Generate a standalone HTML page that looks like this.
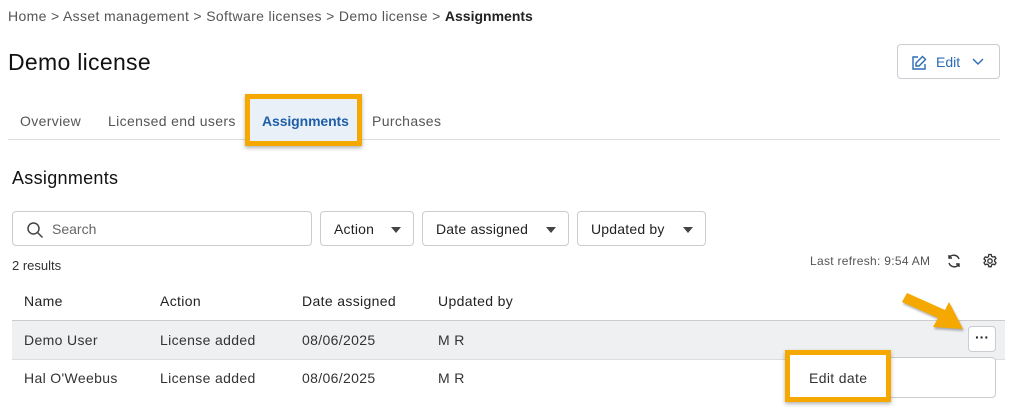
<!DOCTYPE html>
<html><head><style>
body{margin:0;width:1009px;height:409px;background:#fff;font-family:"Liberation Sans",sans-serif;color:#222;position:relative;overflow:hidden}
.a{position:absolute;white-space:nowrap}
.s{letter-spacing:0.35px}
.box{position:absolute;border:1px solid #c9ccd1;border-radius:4px;background:#fff;box-sizing:border-box}
.dd{font-size:14px;color:#222;display:flex;align-items:center;padding-left:13px;letter-spacing:0.2px}
.tri{position:absolute;right:12px;top:15px;width:0;height:0;border-left:5px solid transparent;border-right:5px solid transparent;border-top:6px solid #444}
</style></head><body>
<div class="a s" style="left:8px;top:8px;font-size:14px;color:#555">Home &gt; Asset management &gt; Software licenses &gt; Demo license &gt; <b style="color:#222;letter-spacing:0">Assignments</b></div>
<div class="a" style="left:8px;top:49px;font-size:23px;color:#111;letter-spacing:0.3px">Demo license</div>
<div class="box" style="left:897px;top:44px;width:103px;height:35px;color:#2a6cb5;font-size:14px">
<svg class="a" style="left:13px;top:10px" width="16" height="16" viewBox="0 0 16 16" fill="none" stroke="#2a6cb5" stroke-width="1.4"><path d="M7 2H2v12h12V9"/><path d="M11.5 1.5l3 3L8 11H5V8z"/></svg>
<span class="a" style="left:38px;top:9px">Edit</span>
<svg class="a" style="left:74px;top:13px" width="12" height="8" viewBox="0 0 12 8" fill="none" stroke="#2a6cb5" stroke-width="1.4"><path d="M1 1l5 5 5-5"/></svg>
</div>
<div class="a" style="left:8px;top:139px;width:992px;height:1px;background:#ddd"></div>
<div class="a" style="left:245px;top:94px;width:107px;height:42px;border:5px solid #f5a800;background:#e9f0f8;box-shadow:0 2px 4px rgba(0,0,0,.3)"></div>
<div class="a s" style="left:20px;top:113px;font-size:14px;color:#555">Overview</div>
<div class="a s" style="left:108px;top:113px;font-size:14px;color:#555">Licensed end users</div>
<div class="a" style="left:262px;top:113px;font-size:14px;color:#1f5fa8;font-weight:bold;letter-spacing:-0.1px">Assignments</div>
<div class="a s" style="left:372px;top:113px;font-size:14px;color:#555">Purchases</div>
<div class="a" style="left:12px;top:168px;font-size:18px;color:#111;letter-spacing:0.3px">Assignments</div>
<div class="box" style="left:12px;top:211px;width:300px;height:35px">
<svg class="a" style="left:13px;top:9px" width="18" height="18" viewBox="0 0 18 18" fill="none" stroke="#444" stroke-width="1.5"><circle cx="7.5" cy="7.5" r="5.5"/><path d="M11.5 11.5l5 5"/></svg>
<span class="a" style="left:39px;top:9px;font-size:14px;color:#666">Search</span></div>
<div class="box dd" style="left:320px;top:211px;width:94px;height:35px">Action<span class="tri"></span></div>
<div class="box dd" style="left:422px;top:211px;width:147px;height:35px">Date assigned<span class="tri"></span></div>
<div class="box dd" style="left:577px;top:211px;width:129px;height:35px">Updated by<span class="tri"></span></div>
<div class="a" style="left:12px;top:258px;font-size:13px;color:#333">2 results</div>
<div class="a" style="left:810px;top:254px;font-size:12px;color:#555;letter-spacing:0.3px">Last refresh: 9:54 AM</div>
<svg class="a" style="left:946px;top:253px" width="16" height="16" viewBox="0 0 16 16" fill="none" stroke="#333" stroke-width="1.4"><path d="M13 6A5.5 5.5 0 0 0 3 5M3 10a5.5 5.5 0 0 0 10 1"/><path d="M3 2v3h3M13 14v-3h-3"/></svg>
<svg class="a" style="left:982px;top:253px" width="16" height="16" viewBox="0 0 16 16" fill="none" stroke="#333" stroke-width="1.3"><circle cx="8" cy="8" r="2.2"/><path d="M6.8 1.5h2.4l.4 1.8 1.4.8 1.8-.6 1.2 2-1.4 1.3v1.6l1.4 1.3-1.2 2-1.8-.6-1.4.8-.4 1.8H6.8l-.4-1.8-1.4-.8-1.8.6-1.2-2 1.4-1.3V7.2L2 5.9l1.2-2 1.8.6 1.4-.8z"/></svg>
<div class="a s" style="left:24px;top:293px;font-size:14px;color:#222">Name</div>
<div class="a s" style="left:160px;top:293px;font-size:14px;color:#222">Action</div>
<div class="a s" style="left:302px;top:293px;font-size:14px;color:#222">Date assigned</div>
<div class="a s" style="left:438px;top:293px;font-size:14px;color:#222">Updated by</div>
<div class="a" style="left:12px;top:320px;width:993px;height:38px;background:#eef0f2;border-top:1px solid #ccc;border-bottom:1px solid #ddd"></div>
<div class="a s" style="left:24px;top:332px;font-size:14px;color:#333">Demo User</div>
<div class="a s" style="left:160px;top:332px;font-size:14px;color:#333">License added</div>
<div class="a s" style="left:302px;top:332px;font-size:14px;color:#333">08/06/2025</div>
<div class="a s" style="left:438px;top:332px;font-size:14px;color:#333">M R</div>
<div class="a s" style="left:24px;top:370px;font-size:14px;color:#333">Hal O'Weebus</div>
<div class="a s" style="left:160px;top:370px;font-size:14px;color:#333">License added</div>
<div class="a s" style="left:302px;top:370px;font-size:14px;color:#333">08/06/2025</div>
<div class="a s" style="left:438px;top:370px;font-size:14px;color:#333">M R</div>
<div class="box" style="left:968px;top:326px;width:28px;height:26px;font-size:14px;font-weight:bold;text-align:center;line-height:20px">···</div>
<div class="box" style="left:786px;top:357px;width:210px;height:41px"></div>
<div class="a" style="left:785px;top:350px;width:96px;height:42px;border:5px solid #f5a800;background:#fff;box-shadow:0 2px 4px rgba(0,0,0,.3)"></div>
<div class="a s" style="left:809px;top:370px;font-size:14px;color:#333">Edit date</div>
<svg class="a" style="left:898px;top:292px" width="72" height="44" viewBox="0 0 72 44"><path d="M4 10L40 26l-5 9 30 2-14-27-4 8L9 1z" fill="#f5a800" style="filter:drop-shadow(1px 2px 1px rgba(0,0,0,.3))"/></svg>
</body></html>
